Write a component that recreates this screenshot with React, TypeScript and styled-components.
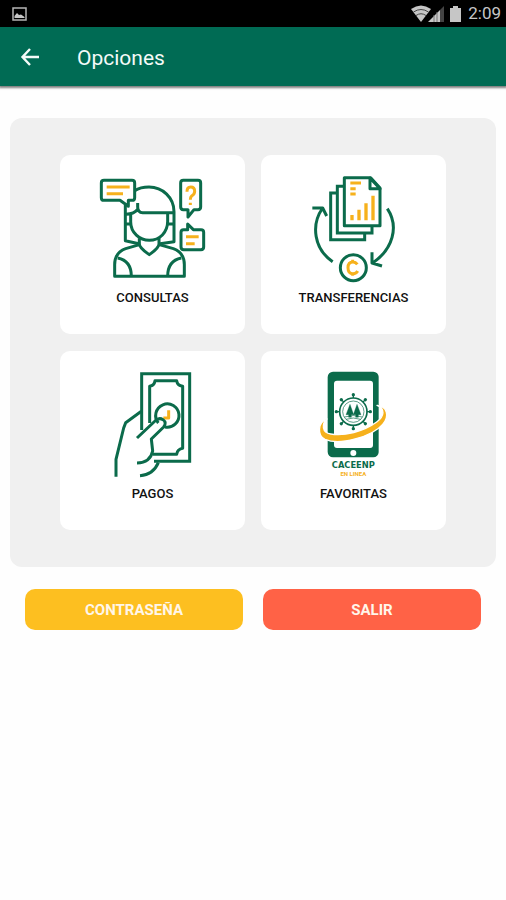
import React from "react";
import styled, { createGlobalStyle } from "styled-components";

const GREEN = "#006b54";
const INK = "#0b6b4b";
const GOLD = "#f6b11c";

const GlobalStyle = createGlobalStyle`
  *, *::before, *::after { box-sizing: border-box; }
  body {
    margin: 0;
    background: #fefefe;
    font-family: Roboto, "Liberation Sans", sans-serif;
  }
  button { font-family: inherit; cursor: pointer; }
`;

const StatusBar = styled.div`
  display: flex;
  align-items: center;
  justify-content: space-between;
  height: 27px;
  padding: 0 5px 0 12px;
  background: #000;
  color: #c6c6c6;
`;

const StatusGroup = styled.div`
  display: flex;
  align-items: center;
`;

const Clock = styled.time`
  margin-left: 4px;
  font-size: 17px;
  line-height: 27px;
`;

const AppBar = styled.header`
  display: flex;
  align-items: center;
  gap: 29px;
  height: 59px;
  padding: 0 12px;
  background: ${GREEN};
  color: #f4faf8;
  box-shadow: 0 1px 2px 1px rgba(0, 0, 0, 0.5);
`;

const BackButton = styled.button`
  display: grid;
  place-items: center;
  width: 36px;
  height: 36px;
  padding: 0;
  border: 0;
  background: none;
  color: inherit;
`;

const Title = styled.h1`
  margin: 0;
  padding-top: 2px;
  font-size: 21px;
  font-weight: 400;
  line-height: 28px;
`;

const Panel = styled.main`
  display: grid;
  grid-template-columns: 1fr 1fr;
  gap: 17px 16px;
  margin: 32px 10px 0;
  padding: 37px 50px;
  border-radius: 12px;
  background: #f0f0f0;
`;

const OptionCard = styled.button`
  display: flex;
  flex-direction: column;
  align-items: center;
  gap: 8px;
  padding: 10px 0 26px;
  border: 0;
  border-radius: 10px;
  background: #fff;
  color: #111;
`;

const CardLabel = styled.span`
  font-size: 13px;
  font-weight: 500;
  line-height: 20px;
`;

const Actions = styled.footer`
  display: grid;
  grid-template-columns: 1fr 1fr;
  gap: 20px;
  padding: 22px 25px;
`;

const ActionButton = styled.button<{ $color: string }>`
  height: 41px;
  padding: 0;
  border: 0;
  border-radius: 10px;
  background: ${(p) => p.$color};
  color: #fff6ea;
  font-size: 15px;
  font-weight: 700;
`;

const Art = styled.svg`
  display: block;
  width: 125px;
  height: 115px;
  overflow: visible;
  fill: none;
  stroke: ${INK};
  stroke-width: 9;
  stroke-linejoin: round;
`;

const QueriesIcon = () => (
  <Art viewBox="0 0 375 345" aria-hidden="true">
    <path d="M42 46H126Q134 46 134 54V98Q134 106 126 106H115V124L90 106H42Q34 106 34 98V54Q34 46 42 46Z" />
    <path d="M280 46H324Q332 46 332 54V126Q332 134 324 134H312L294 156V134H280Q272 134 272 126V54Q272 46 280 46Z" />
    <path d="M293 177L310 194H333Q341 194 341 202V246Q341 254 333 254H281Q273 254 273 246V202Q273 194 281 194H293Z" />
    <g stroke={GOLD}>
      <path d="M50 66H119M50 86H99M288 215H326M288 236H314" />
      <path d="M291 80Q291 66 302 66Q314 66 314 79Q314 88 305 93Q301 96 301 104M301 113V120" />
    </g>
    <path d="M134 77Q151 66 177 66C218 66 252 98 252 140V230L205 237M106 120V227L150 237" />
    <path d="M143 114V126Q143 143 158 143H250M144 132Q133 147 108 148" />
    <path d="M122 148V170C122 203 149 226 178 226C209 226 233 202 233 169V145M122 177H107M234 177H252" />
    <path d="M148 220V237C148 249 166 260 178 269C190 260 207 249 207 237V220" />
    <path d="M151 238L107 251Q74 263 74 299V334H283V299Q283 263 250 251L205 238" />
    <path d="M83 279Q124 287 124 334M274 279Q233 287 233 334" />
  </Art>
);

const TransfersIcon = () => (
  <Art viewBox="3 0 375 345" aria-hidden="true">
    <path d="M141 84H122V224H224V205M160 64H142V204H246V184" strokeLinejoin="miter" />
    <path d="M163 38H242L270 69V182H163Z" />
    <path d="M240 39V71H270Z" fill="#fff" />
    <g stroke={GOLD}>
      <path d="M181 54H213M181 71H197M181 87H197" />
      <path d="M186 150V166M207 134V166M228 115V166M249 92V166" strokeWidth="10" />
    </g>
    <path d="M67 129L98 129L110 153M98 129C62 180 72 252 128 290M292 131C328 185 308 253 249 293M246 262V294L276 303" />
    <circle cx="190" cy="308" r="39" />
    <path d="M202 298Q197 291 189 291Q174 291 174 308Q174 326 189 326Q199 326 203 318M188 284V293M188 324V332" stroke={GOLD} />
  </Art>
);

const PaymentsIcon = () => (
  <Art viewBox="0 3 375 345" aria-hidden="true">
    <path d="M155 210V41H299V304H192" strokeLinejoin="miter" />
    <path d="M179 189V79Q193 76 195 62H260Q262 76 278 79V265Q262 268 260 283H188" />
    <path d="M236 151V174H220" stroke={GOLD} />
    <path d="M205 189A35 35 0 1 1 225 201" />
    <path d="M154 154L107 188L101 204L78 298V350" />
    <path d="M141 234L195 183Q207 171 219 179Q231 188 221 201L184 237L188 273Q181 308 141 309M150 347Q190 344 205 308" />
  </Art>
);

const FavoritesIcon = () => {
  const spokes = [0, 45, 90, 135, 180, 225, 270, 315];
  return (
    <Art viewBox="3 3 375 345" aria-hidden="true">
      <rect x="113" y="35" width="153" height="257" rx="16" fill={INK} stroke="none" />
      <rect x="132" y="62" width="117" height="202" rx="9" fill="#fff" stroke="none" />
      <circle cx="190" cy="279" r="9" fill="#fff" stroke="none" />
      <g strokeWidth="3">
        <circle cx="190" cy="155" r="41" strokeWidth="5" />
        <circle cx="190" cy="155" r="32" strokeWidth="2" />
        {spokes.map((angle) => (
          <g key={angle} transform={`rotate(${angle} 190 155)`}>
            <path d="M190 114V106" strokeWidth="4" />
            <circle cx="190" cy="104" r="5" fill={INK} stroke="none" />
          </g>
        ))}
        <path d="M180 133L191 164H184V172H176V164H168ZM201 133L213 164H205V172H197V164H190Z" fill={INK} strokeWidth="1" />
        <path d="M163 171Q190 162 217 171M168 178Q190 170 212 178" strokeWidth="2" />
      </g>
      <path
        d="M111 177C82 188 82 227 105 238C149 257 245 231 278 193C299 169 292 139 261 136C286 146 284 168 260 186C221 215 162 229 122 222C96 218 94 192 111 177Z"
        fill={GOLD}
        stroke="#fff"
        strokeWidth="4"
      />
      <g stroke="none" textAnchor="middle" fontWeight="700">
        <text x="190" y="324" fill={INK} fontFamily="DejaVu Sans, sans-serif" fontSize="25">CACEENP</text>
        <text x="190" y="349" fill={GOLD} fontFamily="Roboto, sans-serif" fontSize="18">EN LINEA</text>
      </g>
    </Art>
  );
};

const options = [
  { label: "CONSULTAS", Icon: QueriesIcon },
  { label: "TRANSFERENCIAS", Icon: TransfersIcon },
  { label: "PAGOS", Icon: PaymentsIcon },
  { label: "FAVORITAS", Icon: FavoritesIcon },
];

export default function App() {
  return (
    <>
      <GlobalStyle />
      <StatusBar>
        <svg width="15" height="14" viewBox="0 0 15 14" fill="none" aria-hidden="true">
          <rect x="1" y="1" width="13" height="12" stroke="#b5b5b5" strokeWidth="1.5" />
          <path d="M2.500 11V9L5 6L7 8L9 7.500L12.500 10V11Z" fill="#c6c6c6" />
        </svg>
        <StatusGroup>
          <svg width="53" height="18" viewBox="0 0 53 18" aria-hidden="true">
            <path d="M0 4Q10 -3 20 4L10 17Z" fill="#c6c6c6" />
            <path d="M2.500 7Q10 2 17.500 7M5 10.500Q10 7 15 10.500" fill="none" stroke="#444" />
            <path d="M17 17L29 5V17Z" fill="#c6c6c6" />
            <path d="M29 5L33 1V17H29Z" fill="#444" />
            <path d="M23 10V17M26 7V17" stroke="#777" />
            <path d="M39 3H42V1H47V3H50V17H39Z" fill="#c6c6c6" />
          </svg>
          <Clock>2:09</Clock>
        </StatusGroup>
      </StatusBar>
      <AppBar>
        <BackButton type="button" aria-label="Volver">
          <svg width="20" height="18" viewBox="0 0 20 18" fill="none" stroke="currentColor" strokeWidth="2.400" aria-hidden="true">
            <path d="M19 9H3M10 1L2.500 9L10 17" />
          </svg>
        </BackButton>
        <Title>Opciones</Title>
      </AppBar>
      <Panel>
        {options.map(({ label, Icon }) => (
          <OptionCard key={label} type="button">
            <Icon />
            <CardLabel>{label}</CardLabel>
          </OptionCard>
        ))}
      </Panel>
      <Actions>
        <ActionButton type="button" $color="#fdbf20">CONTRASEÑA</ActionButton>
        <ActionButton type="button" $color="#ff6246">SALIR</ActionButton>
      </Actions>
    </>
  );
}
